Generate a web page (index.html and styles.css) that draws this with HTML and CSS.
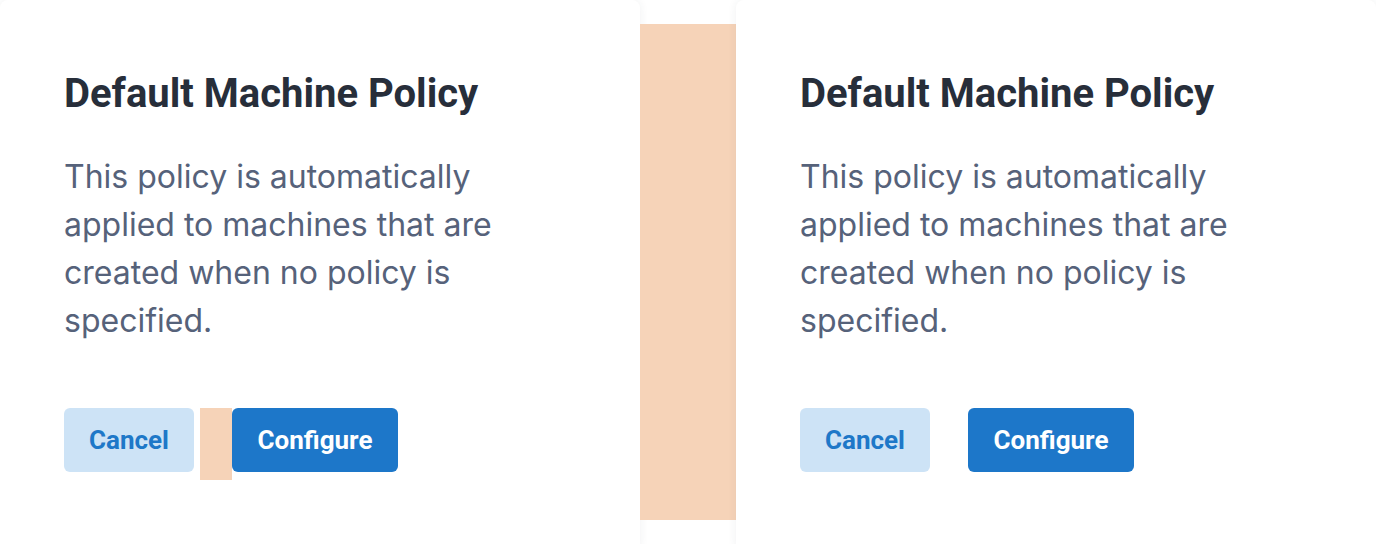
FILE: index.html
```html
<!DOCTYPE html>
<html lang="en">
<head>
<meta charset="utf-8">
<title>Default Machine Policy</title>
<link rel="stylesheet" href="styles.css">
</head>
<body>
<div class="stage">
  <section class="card">
    <h2 class="card-title">Default Machine Policy</h2>
    <p class="card-text">This policy is automatically applied to machines that are created when no policy is specified.</p>
    <div class="actions">
      <button class="btn btn-secondary">Cancel</button>
      <span class="measure-margin"></span>
      <button class="btn btn-primary">Configure</button>
    </div>
  </section>
  <div class="measure-gap"></div>
  <section class="card">
    <h2 class="card-title">Default Machine Policy</h2>
    <p class="card-text">This policy is automatically applied to machines that are created when no policy is specified.</p>
    <div class="actions">
      <button class="btn btn-secondary">Cancel</button>
      <span class="spacer"></span>
      <button class="btn btn-primary">Configure</button>
    </div>
  </section>
</div>
</body>
</html>
```

FILE: styles.css
```css
html, body {
  margin: 0;
  padding: 0;
  background: #ffffff;
}

.stage {
  display: flex;
  align-items: flex-start;
  width: 1376px;
  height: 544px;
  overflow: hidden;
}

.card {
  box-sizing: border-box;
  width: 640px;
  height: 552px;
  flex: none;
  padding: 64px 64px 0 64px;
  background: #ffffff;
  border-radius: 8px;
  box-shadow: 0 0 10px rgba(40, 50, 70, 0.07);
}

.measure-gap {
  flex: none;
  width: 96px;
  height: 496px;
  margin-top: 24px;
  background: #f6d3b8;
}

.card-title {
  margin: 0;
  font-family: Roboto, "Liberation Sans", sans-serif;
  font-weight: 700;
  font-size: 40px;
  line-height: 60px;
  color: #272e3a;
}

.card-text {
  margin: 29px 0 0 0;
  width: 480px;
  font-family: Inter, "Open Sans", sans-serif;
  font-size: 32px;
  line-height: 48px;
  color: #56627a;
}

.actions {
  display: flex;
  align-items: flex-start;
  margin-top: 63px;
}

.btn {
  box-sizing: border-box;
  height: 64px;
  padding: 0 24px;
  border: none;
  border-radius: 6px;
  font-family: Roboto, "Liberation Sans", sans-serif;
  font-weight: 700;
  font-size: 26px;
  cursor: pointer;
}

.btn-secondary {
  width: 130px;
  background: #cde3f6;
  color: #1e78c8;
}

.btn-primary {
  width: 166px;
  background: #1d77c9;
  color: #ffffff;
}

.measure-margin {
  display: block;
  width: 32px;
  height: 72px;
  margin-left: 6px;
  background: #f6d3b8;
}

.spacer {
  display: block;
  width: 32px;
  margin-left: 6px;
}
```
